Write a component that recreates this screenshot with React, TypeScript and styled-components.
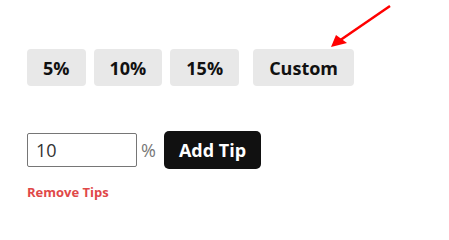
import styled, {createGlobalStyle} from 'styled-components'

const GlobalStyle = createGlobalStyle`
  html, body {
    margin: 0;
    background: #ffffff;
  }

  body {
    font-family: "Open Sans", "Liberation Sans", sans-serif;
  }
`

const Page = styled.div`
  position: relative;
  width: 449px;
  height: 231px;
  padding: 49px 0 0 27px;
  box-sizing: border-box;
`

const TipRow = styled.div`
  display: flex;
  gap: 8px;
`

const TipButton = styled.button<{ spaced?: boolean }>`
  height: 37px;
  margin-left: ${props => (props.spaced ? '6px' : '0')};
  padding: 0 16px;
  border: none;
  border-radius: 4px;
  background: #e8e8e8;
  color: #111;
  font-family: inherit;
  font-size: 18px;
  font-weight: 700;
  cursor: pointer;
`

const CustomRow = styled.div`
  display: flex;
  align-items: center;
  margin-top: 45px;
`

const TipInput = styled.input`
  width: 110px;
  height: 34px;
  box-sizing: border-box;
  padding: 0 8px;
  border: 1px solid #767676;
  border-radius: 2px;
  color: #333;
  font-family: inherit;
  font-size: 18px;
  outline: none;
`

const Percent = styled.span`
  margin: 0 8px 0 4px;
  color: #777;
  font-size: 18px;
`

const AddButton = styled.button`
  height: 38px;
  padding: 0 15px;
  border: none;
  border-radius: 5px;
  background: #111;
  color: #fff;
  font-family: inherit;
  font-size: 18px;
  font-weight: 700;
  cursor: pointer;
`

const RemoveLink = styled.a`
  display: inline-block;
  margin-top: 15px;
  color: #e04848;
  font-size: 13px;
  font-weight: 700;
  line-height: 17px;
  cursor: pointer;
`

// annotation arrow drawn over the screenshot
const Arrow = styled.svg`
  position: absolute;
  top: 0;
  left: 0;
  pointer-events: none;
`

const tips = ['5%', '10%', '15%']

export default function App() {
    return (
        <>
            <GlobalStyle/>
            <Page>
                <TipRow>
                    {tips.map(tip => <TipButton key={tip}>{tip}</TipButton>)}
                    <TipButton spaced>Custom</TipButton>
                </TipRow>
                <CustomRow>
                    <TipInput defaultValue="10"/>
                    <Percent>%</Percent>
                    <AddButton>Add Tip</AddButton>
                </CustomRow>
                <RemoveLink>Remove Tips</RemoveLink>
                <Arrow width="449" height="60" viewBox="0 0 449 60">
                    <line x1="390" y1="6" x2="339" y2="41" stroke="#ff0000" strokeWidth="2.5"/>
                    <polygon points="331,47 336,35 347,43" fill="#ff0000"/>
                </Arrow>
            </Page>
        </>
    )
}
